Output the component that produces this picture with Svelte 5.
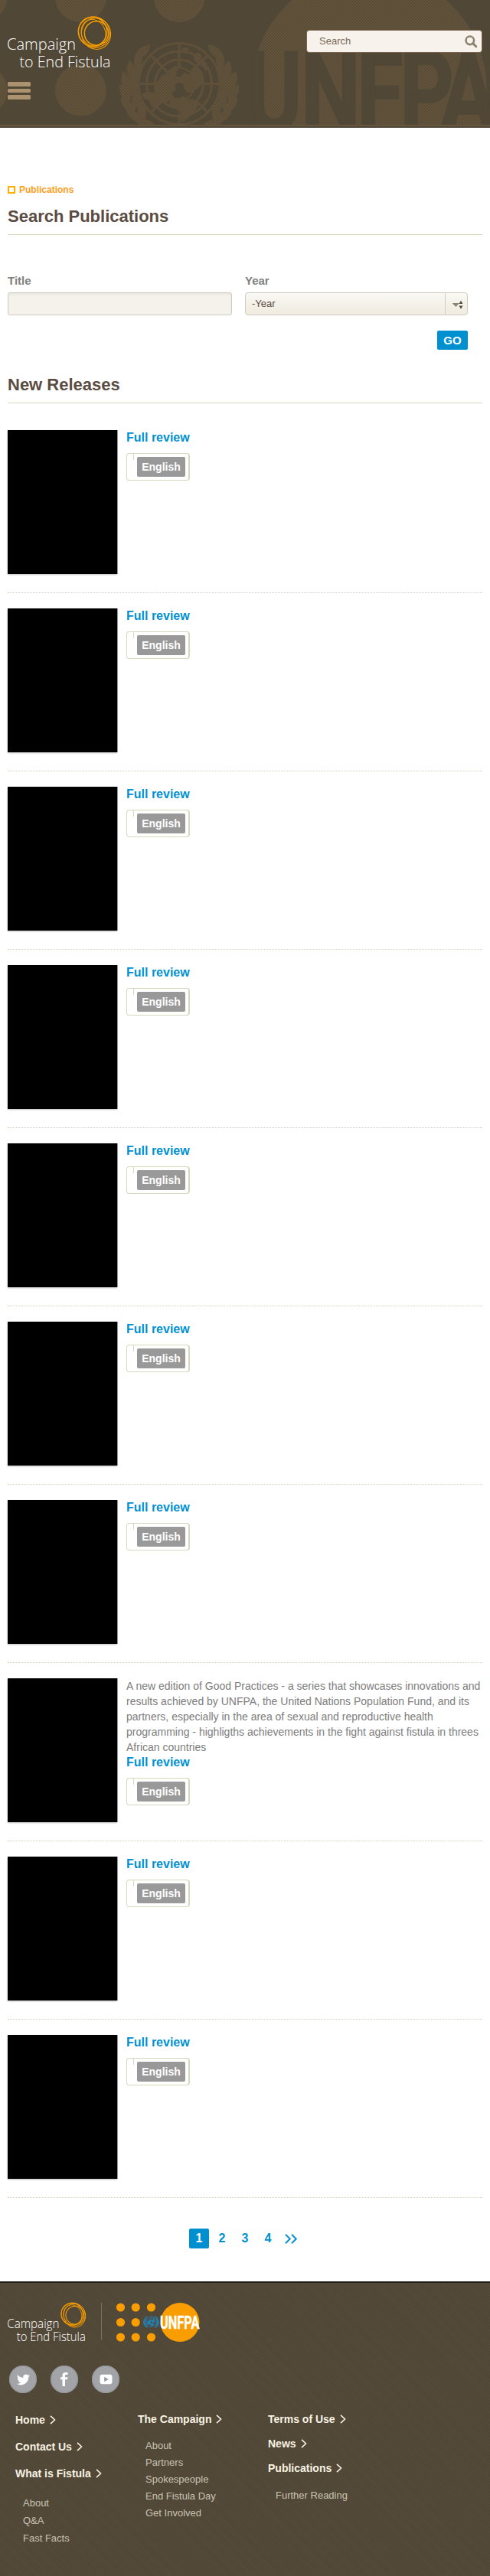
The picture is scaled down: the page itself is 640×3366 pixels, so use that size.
<script>
  const description =
    'A new edition of Good Practices - a series that showcases innovations and results achieved by UNFPA, the United Nations Population Fund, and its partners, especially in the area of sexual and reproductive health programming - highligths achievements in the fight against fistula in threes African countries';
  const releases = Array.from({ length: 10 }, (_, i) => ({ text: i === 7 ? description : '' }));
  const pages = ['1', '2', '3', '4'];
  const columns = [
    [
      { label: 'Home', items: [] },
      { label: 'Contact Us', items: [] },
      { label: 'What is Fistula', items: ['About', 'Q&A', 'Fast Facts'] }
    ],
    [{ label: 'The Campaign', items: ['About', 'Partners', 'Spokespeople', 'End Fistula Day', 'Get Involved'] }],
    [
      { label: 'Terms of Use', items: [] },
      { label: 'News', items: [] },
      { label: 'Publications', items: ['Further Reading'] }
    ]
  ];
  const dots = [5.5, 25.2, 45.5].flatMap((x) => [6, 25.5, 45].map((y) => ({ x, y })));
  const leaves = [
    [-48, -42, 48], [-54, -30, 5], [-63, -17, -8], [-70, -3, -15], [-71, 13, -28], [-67, 29, -42], [-57, 43, -57], [-43, 53, -72],
    [-57, -12, 35], [-60, 4, 20], [-57, 20, 5], [-49, 35, -12]
  ];
</script>

{#snippet campaignLogo()}
  <svg class="campaign" viewBox="0 0 136 68" role="img" aria-label="Campaign to End Fistula">
    <g fill="none" stroke="#f59c00">
      <ellipse cx="113" cy="20" rx="21" ry="19.5" transform="rotate(35 113 20)" stroke-width="1.2" />
      <circle cx="111" cy="19.5" r="18.7" stroke-width="1.4" />
      <ellipse cx="115.5" cy="22" rx="19" ry="20.5" transform="rotate(-15 115.5 22)" stroke-width="1.1" />
      <circle cx="116" cy="21.5" r="15.7" stroke-width="1.5" />
      <ellipse cx="112" cy="21" rx="15.5" ry="18" transform="rotate(-25 112 21)" stroke-width="1" />
    </g>
    <g fill="#fff" font-family="Open Sans, sans-serif" font-weight="300" font-size="20.5">
      <text x="-1" y="43" textLength="90" lengthAdjust="spacingAndGlyphs">Campaign</text>
      <text x="15.5" y="66.3" textLength="119" lengthAdjust="spacingAndGlyphs">to End Fistula</text>
    </g>
  </svg>
{/snippet}

{#snippet emblem()}
  <g fill="none" stroke="currentColor" stroke-width="3.2">
    <circle r="53" /><circle r="42.5" /><circle r="31.5" /><circle r="21" stroke-width="2.5" />
    <path d="M0-53V-21M0 53V38M-53 0H-21M53 0H27M-37.5-37.5L-15-15M37.5-37.5L15-15M-37.5 37.5L-22 22M37.5 37.5L22 22" />
  </g>
  <g fill="currentColor">
    <path d="M-27-5l5-6 7-1 7-7 5 4-1 5 6 1 5-6 6 3 5-3-3-5 8-1 7 5 2 8-4 6-5 2 1 6-8 5-5 1-4-5-2-7-6-2-5 4 2 6-6 4 3 6 7 1 5-3 6 3 9 2 5 6-3 7-6 4-4 7-7 5-4-5 1-7-6-5-7-2-2-7 4-4-9 5-5-5-3-6-6-3-1-6z" />
    <path d="M-49 13l9-3 10 2 5-3 5 7 1 8-7 3-4 5-7-3-2-7-7-3z" />
    <path d="M19-39l7-2 4 5-2 5 7 3 4 9-5 2-4-6-7-4-4-6zM-11-19l5-4 6 1-3 6zM3-46l7-2 4 3-8 3zM14-10l13-2 5 8-5 8-8 1z" />
    {#each [1, -1] as side}
      <g transform={`scale(${side} 1)`}>
        {#each leaves as [x, y, angle]}
          <path transform={`translate(${x} ${y}) rotate(${angle})`} d="M0-14C8-6 8 6 0 14C-7 5-7-6 0-14Z" />
        {/each}
      </g>
    {/each}
  </g>
{/snippet}

{#snippet chevron()}
  <svg class="chevron" viewBox="0 0 8 12"><path d="M1 .8L6.5 6L1 11.2" fill="none" stroke="currentColor" stroke-width="1.6" /></svg>
{/snippet}

<header>
  <svg class="backdrop" viewBox="0 0 640 163" aria-hidden="true">
    <defs>
      <pattern id="weave" width="2" height="2" patternUnits="userSpaceOnUse">
        <rect width="2" height="2" fill="#554a37" />
        <path d="M0 0h1v1H0zM1 1h1v1H1z" fill="#67563b" />
      </pattern>
      <mask id="emblem-mask" maskUnits="userSpaceOnUse" x="140" y="40" width="190" height="123">
        <g color="#fff" transform="translate(234 109.5)">{@render emblem()}</g>
      </mask>
    </defs>
    <g fill="url(#weave)">
      <circle cx="-24" cy="-4.5" r="33.5" /><circle cx="105.5" cy="-4.5" r="33.5" /><circle cx="234" cy="-4.5" r="33.5" />
      <circle cx="-24" cy="118" r="33.5" /><circle cx="105.5" cy="118" r="33.5" />
      <rect x="140" y="40" width="190" height="123" mask="url(#emblem-mask)" />
      <circle cx="482" cy="116" r="153.6" />
    </g>
    <text transform="scale(.76 1)" x="423.7 517.1 613.2 686.8 756.6" y="171" fill="#504736" stroke="#504736" stroke-width="1.5" font-family="Roboto, sans-serif" font-weight="700" font-size="145">UNFPA</text>
  </svg>
  <div class="bar">
    <div class="brand">
      {@render campaignLogo()}
      <div class="burger"><i></i><i></i><i></i></div>
    </div>
    <div class="search">
      <span>Search</span>
      <svg width="17" height="17" viewBox="0 0 17 17"><circle cx="6.8" cy="6.8" r="5.3" fill="none" stroke="#8b8570" stroke-width="2.6" /><path d="M10.6 10.6L14.8 14.8" stroke="#8b8570" stroke-width="3" stroke-linecap="round" /></svg>
    </div>
  </div>
</header>

<main>
  <div class="crumb"><i></i><span>Publications</span></div>
  <h2>Search Publications</h2>
  <form>
    <div class="fields">
      <div class="field"><span class="label">Title</span><div class="input"></div></div>
      <div class="field">
        <span class="label">Year</span>
        <div class="select">
          <span>-Year</span>
          <div class="arrow">
            <svg width="16" height="12" viewBox="0 0 16 12"><path d="M.5 4H10L5.5 9z" fill="#8b8570" /><path d="M9.5 5L12 .8L14.5 5zM9.5 7.5h5L12 11.7z" fill="#504a40" /></svg>
          </div>
        </div>
      </div>
    </div>
    <button type="button">GO</button>
  </form>

  <h2>New Releases</h2>
  <ul class="releases">
    {#each releases as release}
      <li>
        <div class="cover"></div>
        <div class="info">
          {#if release.text}<p>{release.text}</p>{/if}
          <span class="review">Full review</span>
          <div class="langs"><i></i><span>English</span></div>
        </div>
      </li>
    {/each}
  </ul>

  <nav>
    {#each pages as page, i}<span class:current={i === 0}>{page}</span>{/each}
    <span class="next"><svg width="16" height="13" viewBox="0 0 16 13"><path d="M1 .8L6.8 6.5L1 12.2M9 .8L14.8 6.5L9 12.2" fill="none" stroke="#0090d0" stroke-width="1.9" /></svg></span>
  </nav>
</main>

<footer>
  <div class="logos">
    {@render campaignLogo()}
    <i class="divider"></i>
    <svg class="unfpa" width="109" height="52" viewBox="0 0 109 52" role="img" aria-label="UNFPA">
      <g fill="#f99d00">
        {#each dots as dot}
          {#if !(dot.x === 45.5 && dot.y === 25.5)}<circle cx={dot.x} cy={dot.y} r="5.6" />{/if}
        {/each}
        <circle cx="83" cy="25.5" r="25.4" />
      </g>
      <g color="#2384b8" transform="translate(45.500 24.500) scale(.135)">{@render emblem()}</g>
      <text x="57" y="33.500" textLength="51.500" lengthAdjust="spacingAndGlyphs" fill="#fff" stroke="#fff" stroke-width=".4" font-family="Roboto, sans-serif" font-weight="700" font-size="23">UNFPA</text>
    </svg>
  </div>
  <div class="social">
    <span><svg viewBox="0 0 24 24" width="17" height="17"><path fill="#fff" d="M24 4.6a10 10 0 0 1-2.8.8 5 5 0 0 0 2.1-2.7 10 10 0 0 1-3.1 1.2 4.9 4.9 0 0 0-8.4 4.500A14 14 0 0 1 1.700 3.200a4.900 4.900 0 0 0 1.500 6.500 5 5 0 0 1-2.200-.6 4.900 4.900 0 0 0 3.900 4.900 5 5 0 0 1-2.200.1 4.900 4.900 0 0 0 4.600 3.400A9.900 9.900 0 0 1 0 19.500 14 14 0 0 0 21.500 7.100 10 10 0 0 0 24 4.600z" /></svg></span>
    <span><svg viewBox="0 0 10 18" width="10" height="18"><path fill="#fff" d="M2.5 18V9.3H0V6.3h2.5V4.2C2.5 1.3 4 0 6.5 0H9.5V3.1H7.7C6.5 3.1 6 3.5 6 4.6V6.3H9.5L9 9.3H6V18z" /></svg></span>
    <span><svg viewBox="0 0 17 14" width="17" height="14"><rect x=".5" y=".7" width="16" height="12.6" rx="3" fill="#fff" /><path d="M6.2 3.7L11.7 7L6.2 10.3z" fill="#999ba0" /></svg></span>
  </div>
  <div class="columns">
    {#each columns as groups, i}
      <div class="column c{i}">
        {#each groups as group}
          <div class="head"><span>{group.label}</span>{@render chevron()}</div>
          {#if group.items.length}
            <ul>{#each group.items as item}<li>{item}</li>{/each}</ul>
          {/if}
        {/each}
      </div>
    {/each}
  </div>
</footer>

<style>
  :global(body) { margin: 0; background: #fff; font-family: 'Liberation Sans', Arial, sans-serif; color: #7d7d7d; }
  :global(#app) { width: 640px; }
  ul { list-style: none; margin: 0; padding: 0; }
  header { position: relative; box-sizing: border-box; height: 167px; background: #504736; border-bottom: 2px solid #504736; }
  header::after { content: ''; position: absolute; left: 0; right: 0; bottom: 0; height: 2px; background: #66563f; }
  .backdrop { position: absolute; left: 0; top: 0; width: 640px; height: 163px; overflow: hidden; }
  .bar { position: relative; display: flex; justify-content: space-between; padding: 22px 10px 0; }
  .campaign { display: block; width: 136px; height: 68px; overflow: visible; }
  .burger { display: grid; gap: 3px; margin-top: 17px; width: 30px; }
  .burger i { height: 5.7px; border-radius: 1.5px; background: #ac9370; }
  .search { box-sizing: border-box; display: flex; align-items: center; justify-content: space-between; width: 230px; height: 30px; margin-top: 17px; padding: 0 5px 0 16px; border: 1px solid #7a6450; border-radius: 4px; background: #f7f3ec; font-size: 13px; color: #796756; }
  .search span { padding-bottom: 2px; }
  main { padding: 71px 10px 0; }
  .crumb { display: flex; align-items: center; gap: 5px; height: 20px; margin-bottom: 10px; font: bold 12px/20px 'Liberation Sans', sans-serif; color: #ff9e1b; }
  .crumb i { box-sizing: border-box; width: 10px; height: 10px; border: 2px solid #ffae00; }
  h2 { margin: 0; padding-bottom: 8px; border-bottom: 1px solid #d7d8bf; font-size: 22px; line-height: 30px; color: #5a4c42; }
  form { padding: 50px 19px 31px 0; }
  .fields { display: grid; grid-template-columns: 293px 291px; gap: 17px; }
  .label { display: block; margin-bottom: 5px; font: bold 15px/20px 'Liberation Sans', sans-serif; color: #808080; }
  .input, .select { box-sizing: border-box; height: 30px; border: 1px solid #cecbc0; border-radius: 3px; background: #f5f2eb; }
  .input { box-shadow: inset 0 2px 2px #e9e6df; }
  .select { display: flex; align-items: center; justify-content: space-between; border-radius: 4px; background: linear-gradient(#faf8f4, #efebdf); padding-left: 8px; font-size: 13px; color: #5a4c42; }
  .select span { padding-bottom: 1px; }
  .arrow { box-sizing: border-box; width: 29px; height: 28px; padding: 9px 0 0 8px; border-left: 1px solid #d0cdc3; }
  .arrow svg { display: block; }
  button { display: block; width: 40px; height: 25px; margin: 20px 0 0 auto; padding: 0; border: 0; border-radius: 2px; background: #0090d0; color: #fff; font: bold 15px/25px 'Liberation Sans', sans-serif; }
  .releases { margin-top: 15px; }
  .releases li { display: flex; gap: 12px; padding: 20px 0 24px; border-bottom: 1px dotted #d3d4bc; }
  .cover { width: 143px; height: 188px; flex: none; background: #000; box-shadow: 1px 0 0 #999, 0 1px 2px #bbb; }
  p { margin: 0; font-size: 14px; line-height: 20px; }
  .review { display: block; font: bold 16px/20px 'Liberation Sans', sans-serif; color: #0090d0; }
  .langs { position: relative; box-sizing: border-box; width: 83px; height: 36px; margin-top: 10px; padding: 4px 0 0 13px; border: 1px solid #d7d8bf; border-right-width: 2px; border-radius: 4px; }
  .langs i { position: absolute; left: 8px; top: 0; width: 1px; height: 8px; background: #d7d8bf; }
  .langs span { display: block; width: 63px; height: 26px; border-radius: 2px; background: #999; color: #fff; text-align: center; font: bold 14px/26px 'Liberation Sans', sans-serif; }
  nav { display: flex; gap: 4px; padding: 40px 0 43px 237px; }
  nav span { width: 26px; height: 26px; border-radius: 2px; text-align: center; font: bold 16px/25px 'Liberation Sans', sans-serif; color: #0090d0; }
  nav .current { background: #0090d0; color: #fff; }
  .next { display: flex; align-items: center; padding-left: 5px; box-sizing: border-box; }
  .next svg { flex: none; }
  footer { box-sizing: border-box; height: 385px; padding-top: 26px; border-top: 2px solid #211e19; background: repeating-linear-gradient(0deg, #5a51440d 0 1px, transparent 1px 3px), repeating-linear-gradient(45deg, #8a7b6512 0 1px, transparent 1px 3px), #504737; }
  .logos { display: flex; padding-left: 10px; }
  .logos .campaign { width: 103px; height: 51.5px; }
  .divider { width: 1px; height: 49px; margin: 0 19px; background: #7c725e; }
  .social { display: flex; gap: 18px; padding: 30px 0 0 12px; }
  .social span { display: flex; align-items: center; justify-content: center; width: 36px; height: 36px; border-radius: 50%; background: #a2a4a8; box-shadow: inset 0 0 1px 1px #929499; }
  .columns { display: grid; grid-template-columns: 160px 170px 1fr; padding: 24px 0 0 20px; color: #f8f2e2; }
  .head { display: flex; align-items: center; gap: 6px; height: 20px; font: bold 14px/20px 'Liberation Sans', sans-serif; margin-bottom: 12px; }
  .chevron { width: 8px; height: 12px; }
  .column ul { padding-left: 10px; font-size: 13px; line-height: 22px; color: #c9c3b2; margin-top: 15px; }
  .c0 { padding-top: 1px; }
  .c0 .head { margin-bottom: 15px; }
  .c0 ul { line-height: 23px; margin-top: 17px; }
  .c1 ul { margin-top: 14px; }
</style>
